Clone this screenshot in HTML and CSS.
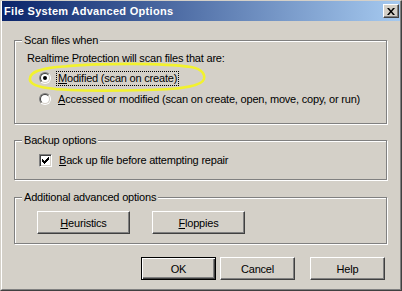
FILE: index.html
```html
<!DOCTYPE html>
<html lang="en">
<head>
    <meta charset="UTF-8">
    <title>File System Advanced Options</title>
    <link rel="stylesheet" href="styles.css">
</head>
<body>

    <div class="window">
        <div class="frame">
            <!-- Title bar -->
            <div class="titlebar">
                <span class="title">File System Advanced Options</span>
                <button class="close" type="button">
                    <svg width="8" height="7" viewBox="0 0 8 7">
                        <path d="M0 0h2l2 2.5L6 0h2L5 3.5 8 7H6L4 4.5 2 7H0l3-3.5z" fill="#000"/>
                    </svg>
                </button>
            </div>

            <div class="content">
                <!-- Scan files -->
                <fieldset class="group scan">
                    <legend>Scan files when</legend>
                    <p class="note">Realtime Protection will scan files that are:</p>
                    <div class="option">
                        <span class="radio checked"><span class="dot"></span></span>
                        <span class="label focused"><u>M</u>odified (scan on create)</span>
                    </div>
                    <div class="option">
                        <span class="radio"><span class="dot"></span></span>
                        <span class="label"><u>A</u>ccessed or modified (scan on create, open, move, copy, or run)</span>
                    </div>
                </fieldset>

                <!-- Backup -->
                <fieldset class="group backup">
                    <legend>Backup options</legend>
                    <div class="option">
                        <span class="checkbox">
                            <svg width="7" height="7" viewBox="0 0 7 7">
                                <path d="M0 2h1v1h1v1h1V3h1V2h1V1h1V0h1v3H6v1H5v1H4v1H3v1H2V6H1V5H0z" fill="#000"/>
                            </svg>
                        </span>
                        <span class="label"><u>B</u>ack up file before attempting repair</span>
                    </div>
                </fieldset>

                <!-- Extra options -->
                <fieldset class="group extra">
                    <legend>Additional advanced options</legend>
                    <div class="row">
                        <button class="btn wide" type="button"><u>H</u>euristics</button>
                        <button class="btn wide" type="button"><u>F</u>loppies</button>
                    </div>
                </fieldset>

                <div class="actions">
                    <button class="btn default" type="button">OK</button>
                    <button class="btn" type="button">Cancel</button>
                    <button class="btn help" type="button">Help</button>
                </div>
            </div>

            <!-- yellow marker drawn over the first option -->
            <svg class="marker" width="184" height="34" viewBox="0 0 184 34">
                <path d="M40 5 C80 2 135 2 164 6 C176 8 178 14 177 18 C175 25 158 28 120 29 C80 30 40 30 20 27 C6 25 2 21 3 17 C4 11 12 8 30 6 C50 4 70 3 90 3" fill="none" stroke="#f2f22e" stroke-width="2.6" stroke-linecap="round"/>
            </svg>
        </div>
    </div>

</body>
</html>
```

FILE: styles.css
```css
body {
    margin: 0;
    font-family: "Liberation Sans", Arial, sans-serif;
    font-size: 11px;
    letter-spacing: -0.2px;
    color: #000;
}
u {
    text-decoration: underline;
    text-underline-offset: 1px;
}
.window {
    width: 402px;
    height: 291px;
    box-sizing: border-box;
    background: #d4d0c8;
    border: 1px solid;
    border-color: #d4d0c8 #404040 #404040 #d4d0c8;
}
.frame {
    position: relative;
    height: 100%;
    box-sizing: border-box;
    border: 1px solid;
    border-color: #fff #808080 #808080 #fff;
    border-top: 0;
}

/* Title bar */
.titlebar {
    height: 20px;
    display: flex;
    align-items: center;
    justify-content: space-between;
    padding: 0 1px 0 2px;
    background: linear-gradient(to right, #0a246a, #a6caf0);
}
.title {
    color: #fff;
    font-weight: bold;
    font-size: 11px;
    letter-spacing: 0.3px;
}
.close {
    width: 16px;
    height: 14px;
    padding: 0;
    display: flex;
    align-items: center;
    justify-content: center;
    background: #d4d0c8;
    border: 1px solid;
    border-color: #fff #404040 #404040 #fff;
    box-shadow: inset -1px -1px #808080;
}

/* Dialog body */
.content {
    padding: 13px 13px 0 12px;
}
.group {
    margin: 0;
    min-width: 0;
    padding: 5px 8px 10px 7px;
    border: 1px solid #808080;
    box-shadow: inset 1px 1px #fff, 1px 1px #fff;
}
.group legend {
    padding: 0 2px;
    line-height: 13px;
    background: #d4d0c8;
}
.scan {
    padding-bottom: 16px;
}
.backup {
    margin-top: 10px;
    padding-bottom: 11px;
}
.extra {
    margin-top: 11px;
    padding-top: 7px;
    padding-bottom: 9px;
}
.note {
    margin: 0 0 0 5px;
    line-height: 13px;
}
.option {
    display: flex;
    align-items: center;
    height: 16px;
    margin-top: 5px;
    padding-left: 17px;
}
.backup .option {
    margin-top: 0;
}
.label {
    margin-left: 5px;
    padding: 0 1px;
    line-height: 13px;
    border: 1px solid transparent;
}
.label.focused {
    border: 1px dotted #000;
}

/* Radio buttons */
.radio {
    width: 12px;
    height: 12px;
    box-sizing: border-box;
    border-radius: 50%;
    border: 1px solid;
    border-color: #808080 #fff #fff #808080;
    display: flex;
}
.radio .dot {
    flex: 1;
    border-radius: 50%;
    border: 1px solid;
    border-color: #404040 #d4d0c8 #d4d0c8 #404040;
    background: #fff;
    display: flex;
    align-items: center;
    justify-content: center;
}
.radio.checked .dot::after {
    content: "";
    width: 4px;
    height: 4px;
    border-radius: 50%;
    background: #000;
}

/* Check box */
.checkbox {
    width: 13px;
    height: 13px;
    box-sizing: border-box;
    border: 1px solid;
    border-color: #808080 #fff #fff #808080;
    box-shadow: inset 1px 1px #404040, inset -1px -1px #d4d0c8;
    background: #fff;
    display: flex;
    align-items: center;
    justify-content: center;
}

/* Push buttons */
.btn {
    width: 75px;
    height: 23px;
    padding: 0;
    font-family: "Liberation Sans", Arial, sans-serif;
    font-size: 11px;
    letter-spacing: -0.2px;
    color: #000;
    background: #d4d0c8;
    border: 1px solid;
    border-color: #fff #404040 #404040 #fff;
    box-shadow: inset -1px -1px #808080;
}
.btn.wide {
    width: 93px;
}
.row {
    display: flex;
    gap: 22px;
    padding-left: 15px;
}
.btn.default {
    border-color: #000;
    box-shadow: inset 1px 1px #fff, inset -1px -1px #404040, inset -2px -2px #808080;
}
.actions {
    display: flex;
    justify-content: flex-end;
    gap: 4px;
    margin-top: 13px;
    padding-right: 2px;
}
.btn.help {
    margin-left: 11px;
}

/* Yellow hand drawn marker */
.marker {
    position: absolute;
    left: 25px;
    top: 60px;
}
```
